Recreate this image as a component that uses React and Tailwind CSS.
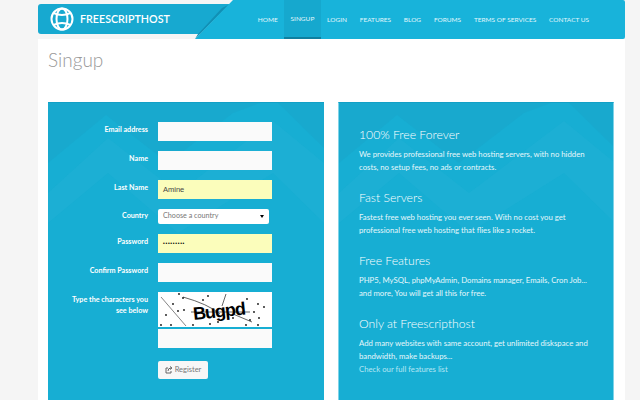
const navItems = ['HOME', 'SINGUP', 'LOGIN', 'FEATURES', 'BLOG', 'FORUMS', 'TERMS OF SERVICES', 'CONTACT US'];

const features = [
  { title: '100% Free Forever', lines: ['We provides professional free web hosting servers, with no hidden', 'costs, no setup fees, no ads or contracts.'] },
  { title: 'Fast Servers', lines: ['Fastest free web hosting you ever seen. With no cost you get', 'professional free web hosting that flies like a rocket.'] },
  { title: 'Free Features', lines: ['PHP5, MySQL, phpMyAdmin, Domains manager, Emails, Cron Job...', 'and more, You will get all this for free.'] },
  { title: 'Only at Freescripthost', lines: ['Add many websites with same account, get unlimited diskspace and', 'bandwidth, make backups...'], link: 'Check our full features list' },
];

const Globe = () => (
  <svg width="24" height="24" viewBox="0 0 24 24" fill="none" stroke="white" strokeWidth="2">
    <circle cx="12" cy="12" r="10.5" />
    <ellipse cx="12" cy="12" rx="5.5" ry="10.5" />
    <path d="M3.5 6 Q12 10 20.5 6 M3.5 18 Q12 14 20.5 18" />
  </svg>
);

const Captcha = () => (
  <div className="relative h-[35px] w-[114px] overflow-hidden bg-white">
    <svg className="absolute inset-0" width="114" height="35" viewBox="0 0 114 35">
      <path d="M3 5 L28 34" stroke="#333" strokeWidth="0.6" fill="none" />
      <path d="M25 5 Q50 12 62 22 M68 2 Q66 8 64 14 M33 20 H92 M75 22 L94 30" stroke="#222" strokeWidth="0.7" fill="none" />
      {[[21,2],[25,6],[50,4],[89,7],[100,12],[106,15],[8,23],[20,19],[26,18],[96,20],[101,26],[3,33],[13,33],[35,33],[52,32],[75,26],[88,33],[100,33],[92,28],[60,30],[45,8],[15,12]].map(([x, y], i) => (
        <circle key={i} cx={x} cy={y} r="0.9" fill="#111" />
      ))}
    </svg>
    <span className="absolute left-[35px] top-[12px] origin-left rotate-[-6deg] text-[18px] leading-[20px] font-bold tracking-[-1px] text-black [font-family:'Liberation_Sans',sans-serif]">Bugpd</span>
  </div>
);

const Field = ({ label, children }) => (
  <div className="mb-[10px] flex items-start">
    <label className="w-[100px] shrink-0 pt-[3px] text-right text-[7.2px] leading-[10px] font-bold text-white">{label}</label>
    <div className="ml-[10px]">{children}</div>
  </div>
);

const inputClass = 'h-[19px] w-[114px] bg-[#fafafa]';
const yellowClass = "flex h-[19px] w-[114px] items-center bg-[#fbfdbb] px-[5px] text-[7.5px] text-[#444] [font-family:'Liberation_Sans',sans-serif]";

const Panel = ({ className, children }) => (
  <div className={`relative h-[298px] w-[276px] overflow-hidden border-t border-[#12a0c6] bg-[#17aed3] ${className}`}>
    <svg className="absolute inset-0" width="276" height="298" viewBox="0 0 276 298">
      <path d="M0 60 L58 12 L120 60 L185 10 L225 -5 L276 45 L276 0 L0 0 Z" fill="#1c9fc5" opacity="0.3" />
      <path d="M0 90 L60 35 L130 90 L225 18 L276 60 L276 120 L225 70 L130 130 L60 70 L0 120 Z" fill="#2ab2d6" opacity="0.25" />
    </svg>
    <div className="relative">{children}</div>
  </div>
);

export default function App() {
  return (
    <div className="h-[400px] w-[640px] overflow-hidden bg-[#f5f5f5] [font-family:Lato,sans-serif]">
      <div className="mx-[38px] w-[587px]">
        <header className="relative flex h-[39px]">
          <div className="mt-[4px] flex h-[30px] w-[162px] items-center gap-[6px] rounded-l-[3px] bg-[#17a9d0] pl-[12px]">
            <Globe />
            <span className="text-[10.7px] font-semibold whitespace-nowrap text-white">FREESCRIPTHOST</span>
          </div>
          {/* diagonal fold between the logo bar and the nav */}
          <svg className="absolute left-[157px] top-0" width="40" height="39" viewBox="0 0 40 39">
            <path d="M5 34 L35 4 H0 V34 Z" fill="#17a9d0" />
            <path d="M38 0 H40 V39 H0 Z" fill="#18b3da" />
            <path d="M0 39 L33 5 L27 8 L3 34 Z" fill="#1190b5" />
          </svg>
          <nav className="ml-[33px] flex h-[39px] flex-1 items-center justify-end rounded-r-[2px] bg-[#18b3da] pr-[29.5px]">
            {navItems.map((item) => (
              <a key={item} className={`flex h-[39px] items-center px-[6.4px] text-[6.5px] whitespace-nowrap text-[#e2f7fc] ${item === 'SINGUP' ? 'border-b-2 border-[#0f7f9f] bg-[#16a8ce]' : ''}`}>{item}</a>
            ))}
          </nav>
        </header>

        <main className="h-[361px] bg-white">
          <h1 className="pt-[6px] pl-[10px] text-[19px] leading-[30px] font-light text-[#999]">Singup</h1>
          <div className="mt-[27px] flex justify-between px-[10px] pr-[11px]">
            <Panel>
              <div className="pt-[19px]">
                <Field label="Email address"><div className={inputClass} /></Field>
                <Field label="Name"><div className={inputClass} /></Field>
                <Field label="Last Name"><div className={yellowClass}>Amine</div></Field>
                <div className="mb-[10px] flex items-center">
                  <label className="w-[100px] text-right text-[7.2px] font-bold text-white">Country</label>
                  <div className="ml-[10px] flex h-[15px] w-[111px] items-center justify-between rounded-[2px] bg-white px-[5px] text-[7.2px] text-[#777]">
                    Choose a country
                    <span className="h-0 w-0 border-x-[2px] border-t-[3px] border-x-transparent border-t-black" />
                  </div>
                </div>
                <Field label="Password"><div className={yellowClass}><span className="text-[5px] tracking-[0.7px] text-black">•••••••••</span></div></Field>
                <Field label="Confirm Password"><div className={inputClass} /></Field>
                <div className="flex items-start">
                  <div className="flex w-[100px] shrink-0 justify-end">
                    <label className="w-[82px] pt-[2px] text-right text-[7.2px] leading-[11px] font-bold text-white">Type the characters you see below</label>
                  </div>
                  <div className="ml-[10px]">
                    <Captcha />
                    <div className={`${inputClass} mt-[2px]`} />
                    <button className="mt-[13px] flex h-[18px] w-[50px] items-center justify-center gap-[2px] rounded-[2px] bg-[#f7f7f7] text-[7.5px] text-[#777]">
                      <svg width="8" height="8" viewBox="0 0 8 8" fill="none" stroke="#666" strokeWidth="1"><path d="M6 5 V7 H1 V2 H3 M3 5 Q3 2 6 2 M5 0.5 L7 2 L5 3.5" /></svg>
                      Register
                    </button>
                  </div>
                </div>
              </div>
            </Panel>
            <Panel className="border-x border-x-[#7fd3e8]">
              <div className="px-[20px] pt-[23px]">
                {features.map((f) => (
                  <div key={f.title} className="mb-[15px]">
                    <h3 className="text-[12.2px] leading-[18px] font-light text-white">{f.title}</h3>
                    <div className="mt-[4px] text-[7.75px] leading-[13px] whitespace-nowrap text-[#e6f7fb]">
                      {f.lines.map((l) => <div key={l}>{l}</div>)}
                      {f.link && <div className="text-[#b5e6f3]">{f.link}</div>}
                    </div>
                  </div>
                ))}
              </div>
            </Panel>
          </div>
        </main>
      </div>
    </div>
  );
}
